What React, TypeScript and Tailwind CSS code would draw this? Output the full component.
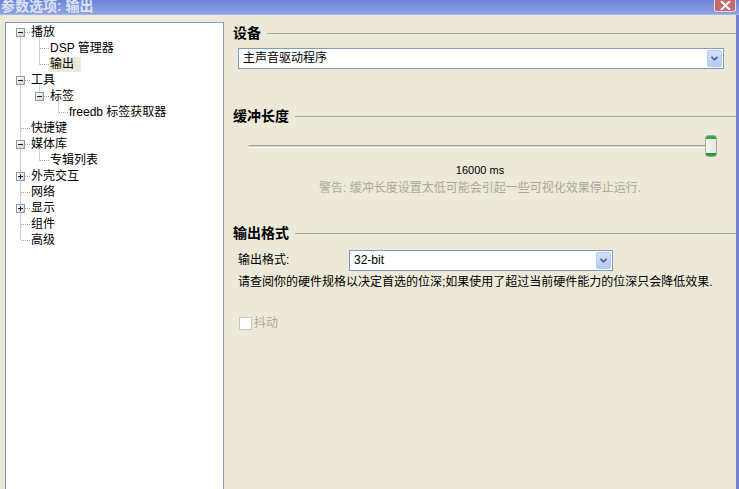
import React from "react";

const FONT = { fontFamily: '"Liberation Sans", "Noto Sans CJK SC", sans-serif' };

type Row = { label: string; level: number; box?: "minus" | "plus"; selected?: boolean };

const rows: Row[] = [
  { label: "播放", level: 0, box: "minus" },
  { label: "DSP 管理器", level: 1 },
  { label: "输出", level: 1, selected: true },
  { label: "工具", level: 0, box: "minus" },
  { label: "标签", level: 1, box: "minus" },
  { label: "freedb 标签获取器", level: 2 },
  { label: "快捷键", level: 0 },
  { label: "媒体库", level: 0, box: "minus" },
  { label: "专辑列表", level: 1 },
  { label: "外壳交互", level: 0, box: "plus" },
  { label: "网络", level: 0 },
  { label: "显示", level: 0, box: "plus" },
  { label: "组件", level: 0 },
  { label: "高级", level: 0 },
];

function ExpandBox({ kind }: { kind: "minus" | "plus" }) {
  return (
    <div className="relative w-[9px] h-[9px] border border-[#7f9db9] bg-gradient-to-br from-white to-[#d6d3c6] flex items-center justify-center">
      <div className="absolute w-[5px] h-px bg-[#1f1f1f]" />
      {kind === "plus" && <div className="absolute w-px h-[5px] bg-[#1f1f1f]" />}
    </div>
  );
}

function TreeLines() {
  const yc = (i: number) => 9.5 + 16 * i;
  const c = "#a5a5a5";
  const lines: [number, number, number, number][] = [];
  lines.push([14.5, yc(0), 14.5, yc(13)]);
  rows.forEach((r, i) => {
    if (r.level === 0) lines.push([15, yc(i), 24, yc(i)]);
  });
  lines.push([33.5, yc(0) + 5, 33.5, yc(2)]);
  lines.push([34, yc(1), 43, yc(1)]);
  lines.push([34, yc(2), 43, yc(2)]);
  lines.push([33.5, yc(3) + 5, 33.5, yc(4)]);
  lines.push([34, yc(4), 43, yc(4)]);
  lines.push([52.5, yc(4) + 5, 52.5, yc(5)]);
  lines.push([53, yc(5), 62, yc(5)]);
  lines.push([33.5, yc(7) + 5, 33.5, yc(8)]);
  lines.push([34, yc(8), 43, yc(8)]);
  return (
    <svg className="absolute left-0 top-0 pointer-events-none" width="217" height="240">
      {lines.map(([x1, y1, x2, y2], k) => (
        <line key={k} x1={x1} y1={y1} x2={x2} y2={y2} stroke={c} strokeWidth="1" strokeDasharray="1 1" />
      ))}
    </svg>
  );
}

function Tree() {
  return (
    <div className="relative ml-[5px] mt-[7px] w-[219px] border border-b-0 border-[#7f9db9] bg-white pt-px">
      <TreeLines />
      <div className="relative flex flex-col">
        {rows.map((r, i) => {
          const pl = r.level === 0 ? "pl-[10px]" : r.level === 1 ? "pl-[29px]" : "pl-[48px]";
          return (
            <div key={i} className={`flex items-center h-[16px] ${pl}`}>
              <div className="w-[9px] h-[9px] flex-none">{r.box && <ExpandBox kind={r.box} />}</div>
              <div
                className={`ml-[5px] text-[12px] leading-[15px] text-black whitespace-nowrap ${
                  r.selected ? "bg-[#ece9d8] pl-[1px] pr-[7px]" : "pl-[1px]"
                }`}
              >
                {r.label}
              </div>
            </div>
          );
        })}
      </div>
    </div>
  );
}

function Heading({ text }: { text: string }) {
  return (
    <div className="flex items-center h-[16px] pl-[9px]">
      <span className="text-[14px] leading-[16px] font-bold text-black whitespace-nowrap">{text}</span>
      <div className="flex-1 ml-[6px] h-px bg-[#a9a89c] mt-[1px]" />
    </div>
  );
}

function ComboArrow() {
  return (
    <div className="w-[15px] h-[17px] mr-px rounded-[2px] border border-[#b5c8f3] bg-gradient-to-b from-[#d6e1fb] to-[#b4c8f6] flex items-center justify-center">
      <svg width="7" height="5" viewBox="0 0 7 5">
        <path d="M0.5 0.8 L3.5 3.8 L6.5 0.8" fill="none" stroke="#4d6185" strokeWidth="1.6" />
      </svg>
    </div>
  );
}

function Combo({ value, className }: { value: string; className: string }) {
  return (
    <div className={`h-[21px] border border-[#7f9db9] bg-white flex items-center justify-between ${className}`}>
      <span className="pl-[4px] text-[12px] leading-[15px] text-black">{value}</span>
      <ComboArrow />
    </div>
  );
}

function Slider() {
  return (
    <div className="flex items-center h-[22px] ml-[24px] mr-[19px]">
      <div className="flex-1 h-[3px] rounded-l-full border-t border-[#9d9c94] bg-[#d8d6cc] border-b border-b-white" />
      <div className="-ml-[5px] w-[12px] h-[22px] rounded-[3px] border border-[#a8a89c] bg-gradient-to-r from-[#f7f7f4] to-[#e4e3dc] flex flex-col justify-between overflow-hidden">
        <div className="h-[3px] bg-[#2fae3e]" />
        <div className="h-[3px] bg-[#21a02f]" />
      </div>
    </div>
  );
}

export default function App() {
  return (
    <div className="w-[739px] h-[489px] overflow-hidden bg-[#ece9d8] flex flex-col" style={FONT}>
      <div className="h-[15px] flex-none bg-gradient-to-b from-[#6c84d6] to-[#8ea2e4] flex items-end justify-between overflow-hidden relative border-b border-[#a9b8ec]">
        <span className="text-[14px] font-bold text-[#dde4f7] leading-[20px] mb-[-2px] pl-[1px] whitespace-nowrap">
          参数选项: 输出
        </span>
        <div className="mr-[3px] mb-[2px] w-[22px] h-[16px] rounded-b-[3px] bg-[#c66a6e] border border-[#e8d6e0] border-t-0 flex items-end justify-center pb-[1px]">
          <svg width="11" height="9" viewBox="0 0 11 9">
            <path d="M1 0 L10 9 M10 0 L1 9" stroke="white" strokeWidth="2" />
          </svg>
        </div>
      </div>
      <div className="flex-1 flex min-h-0">
        <div className="flex-1 flex min-w-0">
          <Tree />
          <div className="flex-1 flex flex-col">
            <div className="mt-[10px]">
              <Heading text="设备" />
            </div>
            <Combo value="主声音驱动程序" className="mt-[7px] ml-[14px] mr-[12px]" />
            <div className="mt-[39px]">
              <Heading text="缓冲长度" />
            </div>
            <div className="mt-[11px]">
              <Slider />
            </div>
            <div className="mt-[6px] h-[14px] text-center text-[11px] leading-[14px] text-black">16000 ms</div>
            <div className="mt-[3px] h-[16px] text-center text-[12px] leading-[16px] text-[#aca899]">
              警告: 缓冲长度设置太低可能会引起一些可视化效果停止运行.
            </div>
            <div className="mt-[29px]">
              <Heading text="输出格式" />
            </div>
            <div className="mt-[9px] flex items-center ml-[14px]">
              <span className="w-[111px] text-[12px] leading-[15px] text-black">输出格式:</span>
              <Combo value="32-bit" className="w-[264px]" />
            </div>
            <div className="mt-[3px] ml-[14px] h-[16px] text-[12px] leading-[16px] text-black whitespace-nowrap">
              请查阅你的硬件规格以决定首选的位深;如果使用了超过当前硬件能力的位深只会降低效果.
            </div>
            <div className="mt-[26px] ml-[15px] flex items-center">
              <div className="w-[13px] h-[13px] border border-[#cac8bb] bg-white" />
              <span className="ml-[2px] text-[12px] leading-[15px] text-[#aca899]">抖动</span>
            </div>
          </div>
        </div>
        <div className="w-[3px] bg-[#7381d0]" />
      </div>
    </div>
  );
}
